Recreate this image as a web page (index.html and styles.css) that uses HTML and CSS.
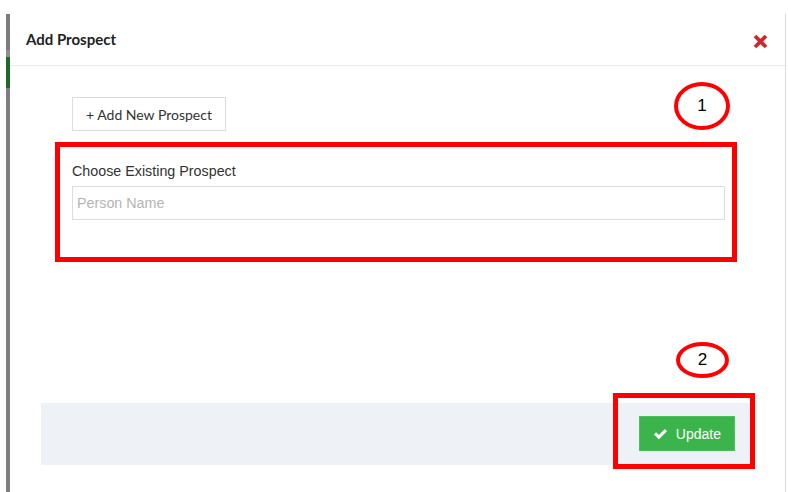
FILE: index.html
```html
<!DOCTYPE html>
<html lang="en">
<head>
  <meta charset="UTF-8" />
  <meta name="viewport" content="width=device-width, initial-scale=1.0"/>
  <title>Add Prospect</title>
  <link rel="stylesheet" href="styles.css">
</head>
<body>

  <div class="layout">
    <div class="rail"></div>

    <div class="modal">
      <div class="modal-header">
        <h4>Add Prospect</h4>
        <button class="close-btn" title="Close">
          <svg width="15" height="15" viewBox="0 0 15 15">
            <path d="M2 2 L13 13 M13 2 L2 13" stroke="#cc2b2b" stroke-width="3.8" />
          </svg>
        </button>
      </div>

      <div class="modal-body">
        <button class="add-btn">+ Add New Prospect</button>

        <div class="highlight">
          <label for="persona">Choose Existing Prospect</label>
          <input type="text" id="persona" placeholder="Person Name" />
        </div>
      </div>

      <div class="modal-footer">
        <button class="update-btn">
          <svg width="13" height="12" viewBox="0 0 13 12">
            <path d="M0 6.4 L2.1 4.3 L4.9 7.1 L10.9 1.1 L13 3.2 L4.9 11.3 Z" fill="#fff" />
          </svg>
          Update
        </button>
      </div>

      <!-- marcas de la captura -->
      <div class="mark mark-one">1</div>
      <div class="mark mark-two">2</div>
      <div class="mark-box"></div>
    </div>
  </div>

</body>
</html>
```

FILE: styles.css
```css
* {
  box-sizing: border-box;
}

body {
  margin: 0;
  background-color: #fff;
  font-family: "Liberation Sans", Arial, sans-serif;
  color: #333;
}

.layout {
  display: flex;
  padding-top: 14px;
  height: 492px;
}

.rail {
  width: 4px;
  margin-left: 6px;
  background: linear-gradient(to bottom,
    #7d7d7d 0, #7d7d7d 36px,
    #8e8e8e 36px, #8e8e8e 43px,
    #1d6a2a 43px, #1d6a2a 74px,
    #7f7f7f 74px, #7f7f7f 100%);
}

.modal {
  position: relative;
  flex: 1;
  margin-right: 2px;
  border-right: 1px solid #dcdcdc;
}

.modal-header {
  display: flex;
  align-items: center;
  justify-content: space-between;
  height: 52px;
  padding: 0 17px 0 16px;
  border-bottom: 1px solid #e8e8e8;
}

.modal-header h4 {
  margin: 0;
  font-family: Lato, sans-serif;
  font-size: 15px;
  font-weight: 700;
  color: #222;
  padding-bottom: 2px;
}

.close-btn {
  background: none;
  border: none;
  padding: 0;
  margin-top: 4px;
  cursor: pointer;
  display: flex;
}

.modal-body {
  padding: 31px 48px 0 45px;
}

.add-btn {
  display: block;
  margin-left: 17px;
  height: 34px;
  padding: 0 13px;
  background-color: #fff;
  border: 1px solid #dcdcdc;
  font-family: Lato, sans-serif;
  font-size: 14px;
  color: #333;
  cursor: pointer;
}

.highlight {
  margin-top: 11px;
  height: 120px;
  border: 5px solid #ff0000;
  padding: 16px 7px 0 12px;
}

label {
  display: block;
  font-size: 14.3px;
  line-height: 16px;
  color: #333;
  margin-bottom: 7px;
}

input {
  display: block;
  width: 100%;
  height: 34px;
  padding: 0 4px;
  border: 1px solid #dcdcdc;
  font-family: "Liberation Sans", Arial, sans-serif;
  font-size: 14.3px;
  color: #333;
}

input::placeholder {
  color: #b4b4b4;
}

.modal-footer {
  display: flex;
  justify-content: flex-end;
  align-items: center;
  margin: 141px 32px 0 31px;
  height: 62px;
  padding-right: 18px;
  background-color: #eef1f6;
}

.update-btn {
  display: flex;
  align-items: center;
  gap: 9px;
  height: 35px;
  margin-top: -1px;
  padding: 0 13px 0 14px;
  background-color: #3bb44b;
  border: 1px solid #4cc05b;
  color: #fff;
  font-family: "Liberation Sans", Arial, sans-serif;
  font-size: 14px;
  cursor: pointer;
}

.update-btn:hover {
  background-color: #2f9e3e;
}

.mark {
  position: absolute;
  display: flex;
  align-items: center;
  justify-content: center;
  border: 4px solid #ff0000;
  border-radius: 50%;
  font-family: "Liberation Sans", Arial, sans-serif;
  font-size: 17px;
  color: #000;
  background-color: #fff;
}

.mark-one {
  left: 664px;
  top: 68px;
  width: 56px;
  height: 48px;
}

.mark-two {
  left: 666px;
  top: 328px;
  width: 53px;
  height: 36px;
}

.mark-box {
  position: absolute;
  left: 603px;
  top: 379px;
  width: 142px;
  height: 76px;
  border: 5px solid #ff0000;
}
```
